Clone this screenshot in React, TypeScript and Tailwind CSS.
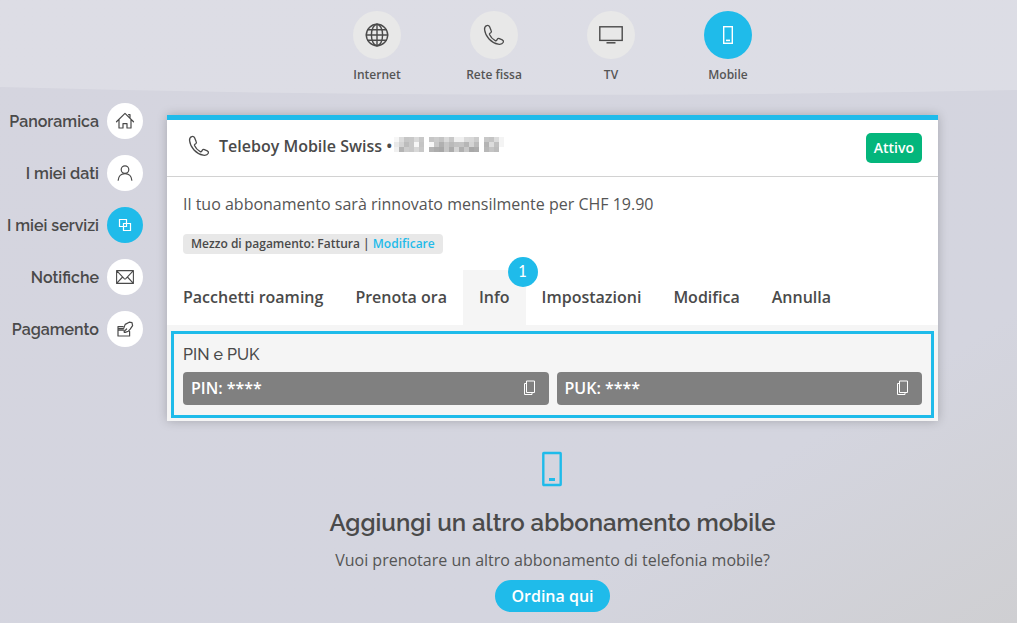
import React, { ReactNode } from "react";

type IconProps = { className?: string };

const stroke = {
  fill: "none",
  stroke: "currentColor",
  strokeLinejoin: "round" as const,
  strokeLinecap: "round" as const,
};

function GlobeIcon() {
  return (
    <svg width="24" height="24" viewBox="0 0 24 24" strokeWidth="1.4" {...stroke}>
      <circle cx="12" cy="12" r="10.7" />
      <ellipse cx="12" cy="12" rx="5.6" ry="10.7" />
      <path d="M12 1.3v21.4M1.3 12h21.4M2.8 6.8h18.4M2.8 17.2h18.4" />
    </svg>
  );
}

function PhoneIcon({ className = "size-6" }: IconProps) {
  return (
    <svg className={className} viewBox="0 0 24 24" strokeWidth="1.3" {...stroke}>
      <path d="M4.6 2.7C3.2 3.4 2.3 4.8 2.6 6.8c.7 6.6 6.6 13 13.6 14.4 2.2.4 4.3-.4 5.1-1.9.5-1-.1-1.9-1-2.4l-2.9-1.3c-.9-.4-1.7-.1-2.2.7l-.6 1c-.3.5-.8.6-1.4.3-2.6-1.3-4.6-3.5-5.7-6-.2-.5-.1-1 .4-1.3l.8-.5c.7-.5.9-1.3.5-2.1L7.6 3.700c-.6-1.200-1.900-1.600-3-1z" />
    </svg>
  );
}

function TvIcon() {
  return (
    <svg width="26" height="26" viewBox="0 0 26 26" fill="none" stroke="currentColor">
      <rect x="1.8" y="4.8" width="22.4" height="13.6" strokeWidth="1.4" />
      <path d="M8.5 20.8h9" strokeWidth="1.5" />
    </svg>
  );
}

function MobileIcon() {
  return (
    <svg width="12" height="20" viewBox="0 0 12 20" fill="none" stroke="currentColor">
      <rect x="1.7" y="1.7" width="8.6" height="16.6" strokeWidth="1.4" />
      <path d="M4 15.4h4" strokeWidth="1.6" />
    </svg>
  );
}

function BigMobileIcon() {
  return (
    <svg width="21" height="36" viewBox="0 0 21 36" fill="none" stroke="currentColor">
      <rect x="1.3" y="2" width="17.4" height="32" rx="0.5" strokeWidth="2.4" />
      <path d="M7 28.5h6" strokeWidth="3" />
    </svg>
  );
}

function HomeIcon() {
  return (
    <svg width="20" height="20" viewBox="0 0 20 20" strokeWidth="1.2" {...stroke}>
      <path d="M1.5 10.800L10 2.400l8.500 8.400M4 8.800v8.200h4v-4.400h4v4.400h4V8.800M13.600 3.700h1.400v3" />
    </svg>
  );
}

function UserIcon() {
  return (
    <svg width="20" height="20" viewBox="0 0 20 20" strokeWidth="1.2" {...stroke}>
      <circle cx="10" cy="6.6" r="3.8" />
      <path d="M3.200 17.200c.2-3.800 2.900-6.600 6.800-6.600s6.600 2.800 6.800 6.600" />
    </svg>
  );
}

function ServicesIcon() {
  return (
    <svg width="14" height="14" viewBox="0 0 14 14" fill="none" stroke="currentColor" strokeWidth="1.2">
      <path d="M1.500 1.500h7v7h-7zM5.500 5.500h7v7h-7z" />
    </svg>
  );
}

function MailIcon() {
  return (
    <svg width="20" height="20" viewBox="0 0 20 20" strokeWidth="1.1" {...stroke}>
      <path d="M1.600 3.600h16.800v12.800H1.600zM1.600 3.600l7.600 8c.5.500 1.100.5 1.600 0l7.600-8M1.600 16.400l6-6.400M18.400 16.400l-6-6.400" />
    </svg>
  );
}

function PaymentIcon() {
  return (
    <svg width="18" height="18" viewBox="0 0 18 18" strokeWidth="1.2" {...stroke}>
      <path d="M7.200 6.600H2v9.400h11.600v-4.600M2 8.600h5M2 10.200h6" />
      <path d="M7.600 8.600l1.600-4.200 4-2.200 2.800.4.6 3-2.400 3.600-1.800 2-3.200 1.200c-1 .3-1.500-.6-.8-1.200l2.200-2.200" />
    </svg>
  );
}

function CopyIcon() {
  return (
    <svg width="14" height="16" viewBox="0 0 14 16" fill="none" stroke="currentColor">
      <path d="M3.500 1h8v11.500h-8zM3 3.500H1.500v11h7.500V12.500" />
    </svg>
  );
}

const MOSAIC = [
  "#f6f6f6 #dcdcdc #c6c6c6 #c8c8c8 #dadada #c8c8c8 #ffffff #c6c6c6 #cccccc #c4c4c4 #dadada #c8c8c8 #f0f0f0 #f0f0f0 #dadada #d8d8d8 #cccccc #ffffff #c8c8c8 #c4c4c4 #dcdcdc #f4f4f4".split(" "),
  "#e8e8e8 #d4d4d4 #bcbcbc #c8c8c8 #f6f6f6 #c4c4c4 #ffffff #f8f8f8 #c8c8c8 #b0b0b0 #c6c6c6 #bababa #c2c2c2 #c4c4c4 #b6b6b6 #d4d4d4 #bcbcbc #ffffff #b4b4b4 #dcdcdc #c0c0c0 #f4f4f4".split(" "),
  "#f0f0f0 #b4b4b4 #cccccc #c8c8c8 #d8d8d8 #c8c8c8 #ffffff #b4b4b4 #acacac #a8a8a8 #c6c6c6 #acacac #d4d4d4 #b0b0b0 #c8c8c8 #a8a8a8 #acacac #ffffff #b8b8b8 #c4c4c4 #bcbcbc #ffffff".split(" "),
];

function MaskedNumber() {
  return (
    <svg className="mb-1 ml-0.5 h-[15px] w-[110px]" viewBox="0 0 110 15" shapeRendering="crispEdges" aria-hidden="true">
      {MOSAIC.map((row, y) =>
        row.map((fill, x) => (
          <rect key={`${x}-${y}`} x={x * 5} y={y * 5} width="5" height="5" fill={fill} />
        ))
      )}
    </svg>
  );
}

const products: { label: string; icon: ReactNode; active?: boolean }[] = [
  { label: "Internet", icon: <GlobeIcon /> },
  { label: "Rete fissa", icon: <PhoneIcon /> },
  { label: "TV", icon: <TvIcon /> },
  { label: "Mobile", icon: <MobileIcon />, active: true },
];

const sections: { label: string; icon: ReactNode; active?: boolean }[] = [
  { label: "Panoramica", icon: <HomeIcon /> },
  { label: "I miei dati", icon: <UserIcon /> },
  { label: "I miei servizi", icon: <ServicesIcon />, active: true },
  { label: "Notifiche", icon: <MailIcon /> },
  { label: "Pagamento", icon: <PaymentIcon /> },
];

const tabs = ["Pacchetti roaming", "Prenota ora", "Info", "Impostazioni", "Modifica", "Annulla"];

function Header() {
  return (
    <header className="relative pr-[79px] pl-[167px]">
      <svg className="absolute inset-0 h-full w-full text-white/20" viewBox="0 0 1000 96" preserveAspectRatio="none" aria-hidden="true">
        <path d="M0 0H1000V90Q500 101 0 87Z" fill="currentColor" />
      </svg>
      <nav className="relative flex h-24 justify-center pt-[11px]">
        {products.map((p) => (
          <a key={p.label} href="#" className="flex w-[117px] flex-col items-center gap-1.5">
            <span
              className={
                p.active
                  ? "flex size-12 items-center justify-center rounded-full bg-[#1fbbea] text-white"
                  : "flex size-12 items-center justify-center rounded-full bg-[#e8e8e8] text-[#4a4a4a]"
              }
            >
              {p.icon}
            </span>
            <span className="text-xs leading-5 font-semibold text-[#555555]">{p.label}</span>
          </a>
        ))}
      </nav>
    </header>
  );
}

function Sidebar() {
  return (
    <nav className="flex w-[143px] shrink-0 flex-col gap-4 pt-[7px]">
      {sections.map((s) => (
        <a
          key={s.label}
          href="#"
          className="flex items-center justify-end gap-2 font-[Raleway,Lato,sans-serif] text-base leading-6 font-semibold whitespace-nowrap"
        >
          <span className="pt-0.5">{s.label}</span>
          <span
            className={
              s.active
                ? "flex size-9 items-center justify-center rounded-full bg-[#1fbbea] text-white"
                : "flex size-9 items-center justify-center rounded-full bg-white"
            }
          >
            {s.icon}
          </span>
        </a>
      ))}
    </nav>
  );
}

function SecretField({ name }: { name: string }) {
  return (
    <button
      type="button"
      aria-label={`${name} copy`}
      className="flex h-[33px] flex-1 items-center justify-between rounded bg-[#808080] pr-3 pb-0.5 pl-2 font-semibold text-white"
    >
      <span>{name}: ****</span>
      <CopyIcon />
    </button>
  );
}

function SubscriptionCard() {
  return (
    <section className="border-t-[5px] border-[#1fbbea] bg-white shadow-[0_0_10px_rgba(0,0,0,0.22)]">
      <div className="flex h-[57px] items-center justify-between border-b border-[#d2d2d2] px-4">
        <div className="flex items-center pb-1">
          <PhoneIcon className="mr-2 ml-1 size-6" />
          <h1 className="font-semibold">Teleboy Mobile Swiss •</h1>
          <MaskedNumber />
        </div>
        <span className="rounded-[5px] bg-[#04b67c] px-2 py-[5px] text-sm leading-5 font-semibold text-white">Attivo</span>
      </div>
      <div className="px-4 pt-[15px]">
        <p className="text-[#555555]">Il tuo abbonamento sarà rinnovato mensilmente per CHF 19.90</p>
        <p className="mt-[18px] inline-block rounded bg-[#e8e8e8] px-2 text-xs leading-5 font-semibold">
          Mezzo di pagamento: Fattura |{" "}
          <a href="#" className="text-[#1fbbea]">
            Modificare
          </a>
        </p>
      </div>
      <div role="tablist" className="mt-4 flex">
        {tabs.map((t) => (
          <button
            key={t}
            type="button"
            role="tab"
            aria-selected={t === "Info"}
            className={
              t === "Info"
                ? "relative h-[55px] bg-[#f5f5f5] px-4 pb-0.5 font-semibold"
                : "h-[55px] px-4 pb-0.5 font-semibold"
            }
          >
            {t}
            {t === "Info" && (
              <span className="absolute -top-[13px] -right-3 flex size-[30px] items-center justify-center rounded-full bg-[#1fbbea] font-[Raleway,Lato,sans-serif] font-medium text-white lining-nums">
                1
              </span>
            )}
          </button>
        ))}
      </div>
      <div className="bg-[#f5f5f5] px-1 pt-1.5 pb-[3px]">
        <div className="border-[3px] border-[#1fbbea] px-[9px] pt-2 pb-2.5">
          <h2 className="pt-px font-[Raleway,Lato,sans-serif] font-medium">PIN e PUK</h2>
          <div className="mt-[5px] flex gap-2">
            <SecretField name="PIN" />
            <SecretField name="PUK" />
          </div>
        </div>
      </div>
    </section>
  );
}

function AddSubscription() {
  return (
    <section className="flex flex-col items-center pt-[30px] pb-3 text-center">
      <span className="text-[#1fbbea]">
        <BigMobileIcon />
      </span>
      <h2 className="mt-5 font-[Raleway,Lato,sans-serif] text-2xl leading-8 font-semibold">
        Aggiungi un altro abbonamento mobile
      </h2>
      <p className="mt-[9px] text-[#555555]">Vuoi prenotare un altro abbonamento di telefonia mobile?</p>
      <button type="button" className="mt-2 h-8 rounded-full bg-[#1fbbea] px-4 font-semibold text-white">
        Ordina qui
      </button>
    </section>
  );
}

export default function App() {
  return (
    <div className="min-h-screen bg-linear-to-br from-[#d5d5df] from-0% via-[#d4d5df] via-75% to-[#cfcfd2] font-['Open_Sans',sans-serif] text-base text-[#4a4a4a]">
      <Header />
      <div className="flex gap-6 pr-[79px]">
        <Sidebar />
        <main className="min-w-0 flex-1 pt-[19px]">
          <SubscriptionCard />
          <AddSubscription />
        </main>
      </div>
    </div>
  );
}
